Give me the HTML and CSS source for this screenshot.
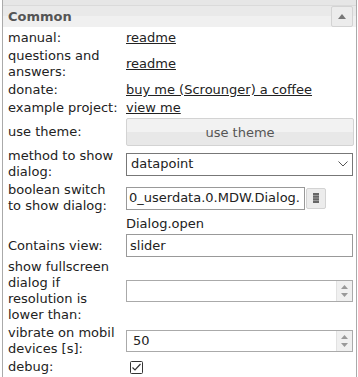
FILE: index.html
```html
<!DOCTYPE html>
<html lang="en">
<head>
    <meta charset="UTF-8">
    <title>Widget attributes - Common</title>
    <link rel="stylesheet" href="styles.css">
</head>
<body>
    <div class="panel">
        <div class="top-strip"></div>

        <div class="group-header">
            <span class="group-title">Common</span>
            <button class="collapse-btn" title="collapse">
                <svg width="8" height="5" viewBox="0 0 8 5"><polygon points="0,5 4,0 8,5" fill="#777"/></svg>
            </button>
        </div>

        <div class="rows">
            <div class="row">
                <div class="label">manual:</div>
                <div class="value"><a href="#" class="link">readme</a></div>
            </div>
            <div class="row">
                <div class="label">questions and answers:</div>
                <div class="value"><a href="#" class="link">readme</a></div>
            </div>
            <div class="row">
                <div class="label">donate:</div>
                <div class="value"><a href="#" class="link">buy me (Scrounger) a coffee</a></div>
            </div>
            <div class="row">
                <div class="label">example project:</div>
                <div class="value"><a href="#" class="link">view me</a></div>
            </div>
            <div class="row">
                <div class="label">use theme:</div>
                <div class="value"><button class="theme-btn">use theme</button></div>
            </div>
            <div class="row">
                <div class="label">method to show dialog:</div>
                <div class="value">
                    <div class="select">
                        <span>datapoint</span>
                        <svg width="10" height="6" viewBox="0 0 10 6"><polyline points="0.5,0.5 5,5 9.5,0.5" fill="none" stroke="#555" stroke-width="1"/></svg>
                    </div>
                </div>
            </div>
            <div class="row">
                <div class="label">boolean switch to show dialog:</div>
                <div class="value oid">
                    <div class="input oid-input">0_userdata.0.MDW.Dialog.</div>
                    <button class="oid-btn">
                        <svg width="6" height="10" viewBox="0 0 6 10">
                            <rect x="0" y="0" width="6" height="10" fill="#666"/>
                            <line x1="0" y1="2.5" x2="6" y2="2.5" stroke="#999"/>
                            <line x1="0" y1="5" x2="6" y2="5" stroke="#999"/>
                            <line x1="0" y1="7.5" x2="6" y2="7.5" stroke="#999"/>
                        </svg>
                    </button>
                </div>
            </div>
            <div class="row">
                <div class="label"></div>
                <div class="value">Dialog.open</div>
            </div>
            <div class="row">
                <div class="label">Contains view:</div>
                <div class="value"><div class="input">slider</div></div>
            </div>
            <div class="row">
                <div class="label">show fullscreen dialog if resolution is lower than:</div>
                <div class="value">
                    <div class="input number">
                        <span class="num-text"></span>
                        <span class="spinner">
                            <svg width="7" height="4" viewBox="0 0 7 4"><polygon points="0,4 3.5,0 7,4" fill="#999"/></svg>
                            <svg width="7" height="4" viewBox="0 0 7 4"><polygon points="0,0 3.5,4 7,0" fill="#999"/></svg>
                        </span>
                    </div>
                </div>
            </div>
            <div class="row">
                <div class="label">vibrate on mobil devices [s]:</div>
                <div class="value">
                    <div class="input number">
                        <span class="num-text">50</span>
                        <span class="spinner">
                            <svg width="7" height="4" viewBox="0 0 7 4"><polygon points="0,4 3.5,0 7,4" fill="#999"/></svg>
                            <svg width="7" height="4" viewBox="0 0 7 4"><polygon points="0,0 3.5,4 7,0" fill="#999"/></svg>
                        </span>
                    </div>
                </div>
            </div>
            <div class="row">
                <div class="label">debug:</div>
                <div class="value">
                    <span class="checkbox">
                        <svg width="13" height="13" viewBox="0 0 13 13">
                            <rect x="0.5" y="0.5" width="12" height="12" rx="1" fill="#fff" stroke="#333"/>
                            <polyline points="2.5,6.5 5,9 10.5,3" fill="none" stroke="#333" stroke-width="1.2"/>
                        </svg>
                    </span>
                </div>
            </div>
        </div>
    </div>
</body>
</html>
```

FILE: styles.css
```css
body {
    margin: 0;
    font-family: "DejaVu Sans", Verdana, sans-serif;
    font-size: 13px;
    line-height: 16px;
    color: #222;
    background: #fff;
}
.panel {
    margin-left: 2px;
    width: 353px;
    height: 377px;
    border-left: 1px solid #aaa;
    border-right: 1px solid #aaa;
    overflow: hidden;
}
.top-strip {
    height: 5px;
    background: #e6e6e6;
    border-bottom: 1px solid #dadada;
}
.group-header {
    display: flex;
    align-items: center;
    justify-content: space-between;
    height: 21px;
    padding: 0 3px 0 5px;
    background: linear-gradient(#e9e9e9 50%, #f0f0f0 50%);
}
.group-title {
    font-weight: bold;
    color: #555;
}
.collapse-btn {
    width: 22px;
    height: 21px;
    padding: 0;
    border: 1px solid #d3d3d3;
    border-radius: 2px;
    background: #ececec;
    display: flex;
    align-items: center;
    justify-content: center;
}
.rows {
    padding-top: 2px;
}
.row {
    display: grid;
    grid-template-columns: 118px 1fr;
    align-items: center;
    padding: 1px 3px 1px 5px;
}
.label {
    padding-right: 6px;
}
.value {
    min-width: 0;
}
.link {
    color: #222;
    text-decoration: underline;
}
.theme-btn {
    width: 228px;
    height: 28px;
    margin-right: -2px;
    border: 1px solid #d3d3d3;
    border-radius: 2px;
    background: linear-gradient(#f2f2f2 50%, #e8e8e8 50%);
    font-family: inherit;
    font-size: 13px;
    color: #555;
}
.select {
    display: flex;
    align-items: center;
    justify-content: space-between;
    height: 23px;
    box-sizing: border-box;
    padding: 0 4px 0 4px;
    border: 1px solid #777;
    background: #fff;
}
.input {
    height: 23px;
    box-sizing: border-box;
    padding: 0 3px;
    border: 1px solid #999;
    background: #fff;
    display: flex;
    align-items: center;
    white-space: nowrap;
    overflow: hidden;
}
.oid {
    display: flex;
    align-items: center;
    gap: 1px;
}
.oid-input {
    width: 179px;
    padding: 0 2px;
}
.oid-btn {
    width: 20px;
    height: 21px;
    padding: 0;
    border: 1px solid #d3d3d3;
    border-radius: 2px;
    background: #ececec;
    display: flex;
    align-items: center;
    justify-content: center;
}
.number {
    justify-content: space-between;
    padding: 0 0 0 6px;
    height: 22px;
    border-color: #aaa;
}
.spinner {
    width: 15px;
    height: 100%;
    background: #f0f0f0;
    border-left: 1px solid #e2e2e2;
    display: flex;
    flex-direction: column;
    align-items: center;
    justify-content: space-evenly;
}
.checkbox {
    display: flex;
    margin-left: 4px;
}
```
